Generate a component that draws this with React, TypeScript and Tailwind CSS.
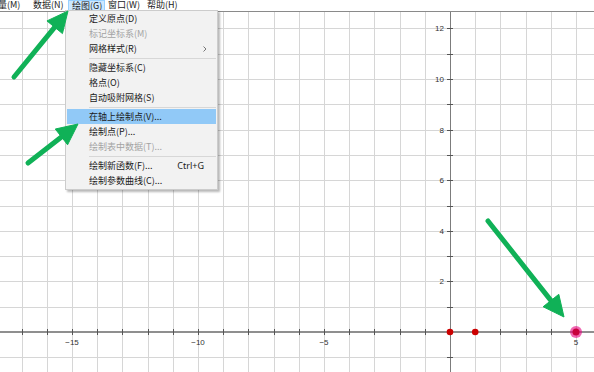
import React from 'react';

// axis geometry, page pixels
const X0 = 450;
const UX = 25.2;
const UY = 25.3;
const TOP = 12; // plot starts under the menu bar
const Y0 = 332 - TOP;

const GREEN = '#10b157';

const menuBar = [
  { label: '变量(M)', cls: 'ml-[-11px] w-[44px] pl-0' },
  { label: '数据(N)', cls: 'w-[35px] pl-0' },
  { label: '绘图(G)', cls: 'w-[37px] pl-[3px] bg-[#cce8ff] border border-[#99d1ff]' },
  { label: '窗口(W)', cls: 'w-[38px] pl-[3px]' },
  { label: '帮助(H)', cls: 'w-[40px] pl-[4px]' },
];

type Item = { label: string; disabled?: boolean; sub?: boolean; shortcut?: string; hover?: boolean } | 'sep';

const items: Item[] = [
  { label: '定义原点(D)' },
  { label: '标记坐标系(M)', disabled: true },
  { label: '网格样式(R)', sub: true },
  'sep',
  { label: '隐藏坐标系(C)' },
  { label: '格点(O)' },
  { label: '自动吸附网格(S)' },
  'sep',
  { label: '在轴上绘制点(V)...', hover: true },
  { label: '绘制点(P)...' },
  { label: '绘制表中数据(T)...', disabled: true },
  'sep',
  { label: '绘制新函数(F)...', shortcut: 'Ctrl+G' },
  { label: '绘制参数曲线(C)...' },
];

const Arrow = ({ tx, ty, px, py }: { tx: number; ty: number; px: number; py: number }) => {
  const dx = px - tx;
  const dy = py - ty;
  const len = Math.hypot(dx, dy);
  const ux = dx / len;
  const uy = dy / len;
  const L = 21;
  const W = 10;
  const bx = px - ux * L;
  const by = py - uy * L;
  const pts = `${px},${py} ${bx - uy * W},${by + ux * W} ${bx + uy * W},${by - ux * W}`;
  return (
    <g>
      <line x1={tx} y1={ty} x2={bx + ux * 2} y2={by + uy * 2} stroke={GREEN} strokeWidth={5} strokeLinecap="round" />
      <polygon points={pts} fill={GREEN} stroke={GREEN} strokeWidth={1} strokeLinejoin="round" />
    </g>
  );
};

const Plot = () => {
  const vx: number[] = [];
  for (let k = -18; k <= 6; k++) vx.push(k);
  const hy: number[] = [];
  for (let k = -2; k <= 13; k++) hy.push(k);
  const px = (k: number) => X0 + k * UX;
  const py = (k: number) => Y0 - k * UY;

  return (
    <svg width={594} height={372 - TOP} className="block" style={{ fontFamily: '"Liberation Sans", Arial, sans-serif' }}>
      {vx.map((k) => (
        <line key={`v${k}`} x1={Math.round(px(k)) + 0.5} y1={0} x2={Math.round(px(k)) + 0.5} y2={372} stroke="#d6d6d6" strokeWidth={1} />
      ))}
      {hy.map((k) => (
        <line key={`h${k}`} x1={0} y1={Math.round(py(k)) + 0.5} x2={594} y2={Math.round(py(k)) + 0.5} stroke="#d6d6d6" strokeWidth={1} />
      ))}
      {/* axes */}
      <line x1={0} y1={Y0} x2={594} y2={Y0} stroke="#8f8f8f" strokeWidth={2} />
      <line x1={X0 + 0.5} y1={0} x2={X0 + 0.5} y2={372} stroke="#7c7c7c" strokeWidth={1} />
      {vx.map((k) => (
        <line key={`tx${k}`} x1={Math.round(px(k)) + 0.5} y1={Y0 - 3} x2={Math.round(px(k)) + 0.5} y2={Y0 + 3} stroke="#555" strokeWidth={1} />
      ))}
      {hy.map((k) => (
        <line key={`ty${k}`} x1={X0 - 3} y1={Math.round(py(k)) + 0.5} x2={X0 + 3} y2={Math.round(py(k)) + 0.5} stroke="#555" strokeWidth={1} />
      ))}
      {[-15, -10, -5, 5].map((k) => (
        <text key={`lx${k}`} x={px(k)} y={Y0 + 13} fontSize={8} fill="#333" textAnchor="middle">
          {k < 0 ? `−${-k}` : k}
        </text>
      ))}
      {[2, 4, 6, 8, 10, 12].map((k) => (
        <text key={`ly${k}`} x={X0 - 6} y={py(k) + 3} fontSize={8} fill="#333" textAnchor="end">
          {k}
        </text>
      ))}
      {/* plotted points */}
      <circle cx={px(0)} cy={Y0} r={3.3} fill="#cc0000" />
      <circle cx={px(1)} cy={Y0} r={3.3} fill="#cc0000" />
      <circle cx={px(5)} cy={Y0} r={6} fill="#e6007e" fillOpacity={0.6} />
      <circle cx={px(5)} cy={Y0} r={3.5} fill="#c8003c" />
    </svg>
  );
};

const App = () => {
  return (
    <div className="relative w-[594px] h-[372px] overflow-hidden bg-white" style={{ fontFamily: '"Noto Sans CJK SC", "Noto Sans", sans-serif' }}>
      {/* menu bar */}
      <div className="flex h-[12px] border-b border-[#8a8a8a] bg-white text-[9px] text-[#1a1a1a]">
        {menuBar.map((m) => (
          <div key={m.label} className={`shrink-0 h-[11px] leading-[10px] whitespace-nowrap ${m.cls}`}>
            {m.label}
          </div>
        ))}
      </div>

      <Plot />

      {/* dropdown of 绘图 */}
      <div className="absolute left-[65px] top-[10px] w-[153px] bg-[#f2f2f2] border border-[#cccccc] pb-[1px] shadow-[2px_2px_2px_rgba(0,0,0,0.28)] text-[9px] text-[#1a1a1a]">
        {items.map((it, i) =>
          it === 'sep' ? (
            <div key={i} className="h-[4px] flex items-center ml-[23px] mr-[1px]">
              <div className="h-px w-full bg-[#d7d7d7]" />
            </div>
          ) : (
            <div
              key={i}
              className={`h-[15px] mx-[1px] pl-[22px] pr-[12px] flex items-center whitespace-nowrap ${it.hover ? 'bg-[#91c9f7]' : ''} ${it.disabled ? 'text-[#a3a3a3]' : ''}`}
            >
              <span>{it.label}</span>
              {it.shortcut && <span className="ml-auto text-[9px]" style={{ fontFamily: '"Noto Sans", sans-serif' }}>{it.shortcut}</span>}
              {it.sub && (
                <svg className="ml-auto mr-[-3px]" width={4} height={6} viewBox="0 0 4 6">
                  <path d="M0.5 0.5 L3 3 L0.5 5.5" fill="none" stroke="#666" strokeWidth={0.9} />
                </svg>
              )}
            </div>
          )
        )}
      </div>

      {/* annotation arrows */}
      <svg className="absolute left-0 top-0 pointer-events-none" width={594} height={372}>
        <Arrow tx={14} ty={77} px={68} py={11} />
        <Arrow tx={28} ty={163} px={78} py={124} />
        <Arrow tx={488} ty={221} px={564} py={317} />
      </svg>
    </div>
  );
};

export default App;
